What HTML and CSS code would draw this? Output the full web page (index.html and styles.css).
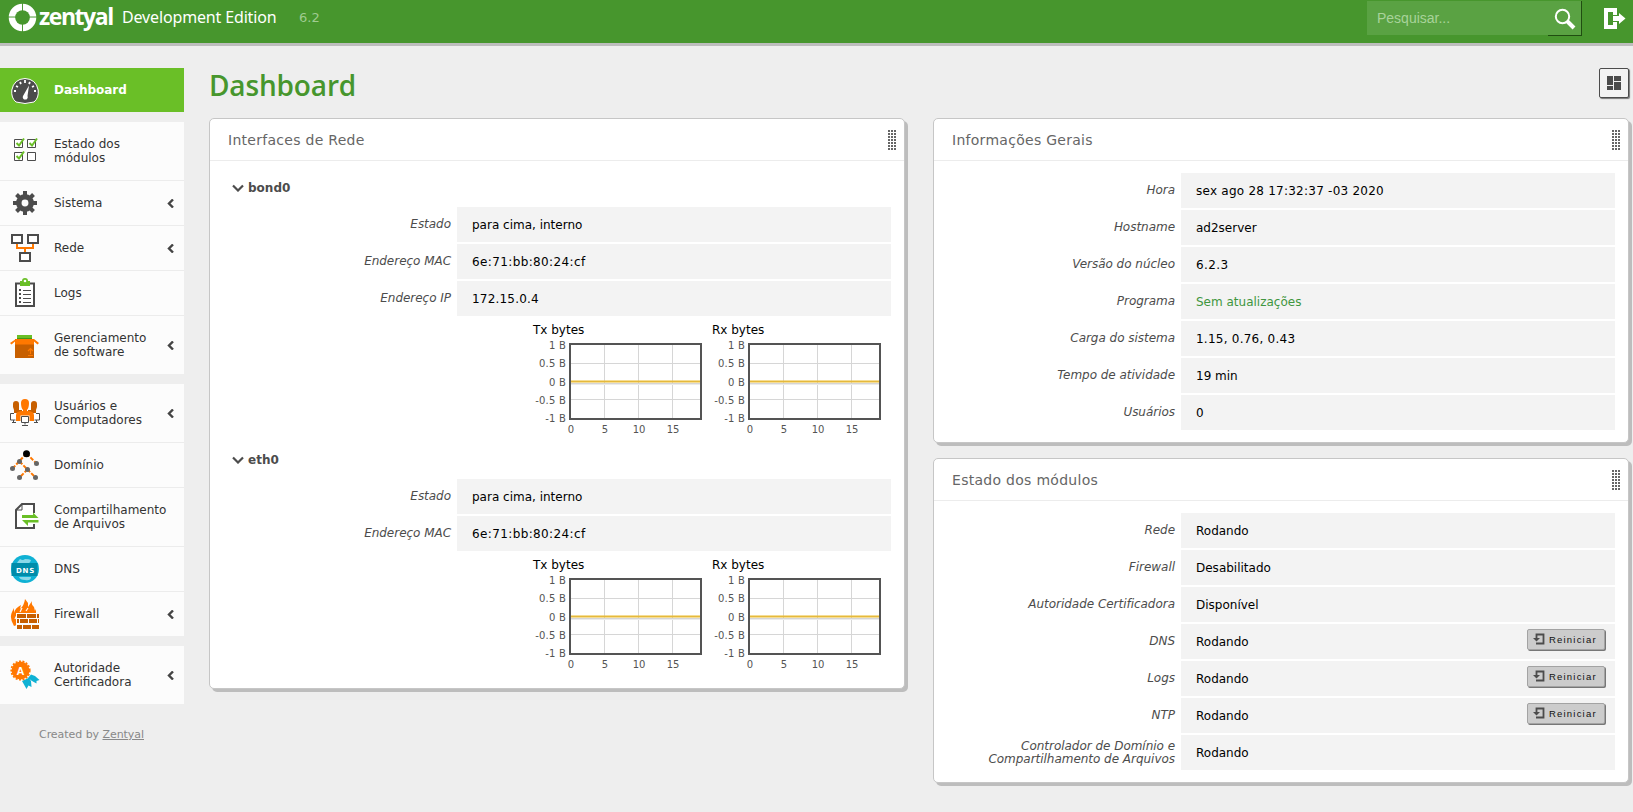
FILE: index.html
```html
<!DOCTYPE html>
<html lang="pt">
<head>
<meta charset="utf-8">
<title>Zentyal - Dashboard</title>
<link rel="stylesheet" href="styles.css">
</head>
<body>
<header class="topbar">
  <svg class="logo-ring" width="29" height="29" viewBox="0 0 30 30"><circle cx="15" cy="15" r="10.500" fill="none" stroke="#fff" stroke-width="7.500"/><path d="M15 0V30M0 14.500H30" stroke="#47962d" stroke-width="1"/><circle cx="15" cy="15" r="7.600" fill="#47962d"/></svg>
  <span class="brand">zentyal</span>
  <span class="edition">Development Edition</span>
  <span class="version">6.2</span>
  <div class="search"><span class="search-text">Pesquisar...</span>
    <span class="search-btn"><svg width="34" height="34" viewBox="0 0 34 34"><circle cx="15.500" cy="15.500" r="6.700" fill="none" stroke="#fff" stroke-width="2"/><path d="M20 20L27 27" stroke="#fff" stroke-width="4"/></svg></span>
  </div>
  <svg class="logout" width="22" height="22" viewBox="0 0 22 22" fill="#fff"><path d="M0 0H13V7H9V4H4V17H9V14H13V21H0Z"/><path d="M9 8H15V5L21.500 10.500L15 16V13H9Z"/></svg>
</header>
<div class="layout">
<aside class="sidebar">
  <nav>
    <div class="group">
      <a class="item active"><svg class="ico" viewBox="0 -1 30 30"><path d="M6 26Q1 22 1.800 14Q4 3 15 2.500Q26 3 28.200 14Q29 22 24 26Q15 29 6 26Z" fill="#4c4c4c" stroke="#fff"/><path d="M4 15H6M6 10L8 11M10 6L11 8M15 4V7M20 6L19 8M24 10L22 11M26 15H24" stroke="#fff" stroke-width="1.800"/><path d="M19 9.500L17.500 20A2.500 2.500 0 1 1 13 20Z" fill="#fff"/></svg><span class="txt">Dashboard</span></a>
    </div>
    <div class="group">
      <a class="item tall"><svg class="ico" viewBox="0 2 30 30"><path d="M4.500 5.500h8v8h-8zM17.500 5.500h8v8h-8zM4.500 18.500h8v8h-8zM17.500 18.500h8v8h-8z" fill="#fff" stroke="#4c4c4c"/><path d="M6.500 9l2.500 2.500l5-7M19.500 9l2.500 2.500l5-7M6.500 22l2.500 2.500l5-7" fill="none" stroke="#6abf27" stroke-width="2"/></svg><span class="txt">Estado dos<br>módulos</span></a>
      <a class="item"><svg class="ico" viewBox="0 0 30 30"><circle cx="15" cy="15" r="6.200" fill="none" stroke="#4c4c4c" stroke-width="5.500"/><path d="M15 3V8M15 22V27M3 15H8M22 15H27M6.500 6.500L10 10M20 20L23.500 23.500M23.500 6.500L20 10M10 20L6.500 23.500" stroke="#4c4c4c" stroke-width="4"/></svg><span class="txt">Sistema</span><svg class="arrow" viewBox="0 0 7 9"><path d="M6 .5L2 4.500L6 8.500" /></svg></a>
      <a class="item"><svg class="ico" viewBox="0 0 30 30"><path d="M7 11V15H23V11M15 15V20" fill="none" stroke="#ff7800" stroke-width="2"/><path d="M2 2h10v8H2zM18 2h10v8H18zM10 20h10v8H10z" fill="#fff" stroke="#4c4c4c" stroke-width="2"/></svg><span class="txt">Rede</span><svg class="arrow" viewBox="0 0 7 9"><path d="M6 .5L2 4.500L6 8.500"/></svg></a>
      <a class="item"><svg class="ico" viewBox="0 0 30 30"><path d="M6 5.500H24V28H6Z" fill="#fff" stroke="#4c4c4c" stroke-width="2"/><path d="M9 3h3q0-3 3-3t3 3h2v5H10V3z" fill="#6abf27"/><circle cx="15" cy="3" r="1.300" fill="#fff"/><path d="M9 12h2M9 16h2M9 20h2M9 24h2" stroke="#4c4c4c" stroke-width="2"/><path d="M13 12.500h8M13 16.500h8M13 20.500h8M13 24.500h8" stroke="#4c4c4c"/></svg><span class="txt">Logs</span></a>
      <a class="item tall"><svg class="ico" viewBox="0 0 30 30"><path d="M7 5h15v5h-15z" fill="#6abf27"/><path d="M7 8h15v1h-15z" fill="#429617"/><path d="M5 9h19v19H5z" fill="#c75f00"/><path d="M6 9H24L29 13L27.500 14.500L24 11.500V14.500H5V11.500L1.500 14.500L0 13Z" fill="#ff7800"/><path d="M20.500 24v-5M18 21l2.500-2.500L23 21M18 25.500h5" fill="none" stroke="#ff7800" stroke-width="1.200"/></svg><span class="txt">Gerenciamento<br>de software</span><svg class="arrow" viewBox="0 0 7 9"><path d="M6 .5L2 4.500L6 8.500"/></svg></a>
    </div>
    <div class="group">
      <a class="item tall"><svg class="ico" viewBox="0 1 30 30"><path d="M3 7q0-3 3-3t3 3v6h3v3H4v-3l-1-3zM27 7q0-3-3-3t-3 3v6h-3v3h8v-3l1-3z" fill="#c75f00"/><path d="M11 6q0-4 4-4t4 4q0 5-2 7v1q7 0 7 4v6H6v-6q0-4 7-4v-1q-2-2-2-7z" fill="#ff7800"/><path d="M0 16h6v9H0zM24 16h6v9h-6zM10.500 18.500h9v8h-9z" fill="#fff"/><g fill="none" stroke="#4c4c4c"><path d="M4 16.500H.5v6.500h5M2 25.500h4M3.500 23v2M26 16.500h3.500v6.500h-5M24 25.500h4M26.500 23v2"/><path d="M11.500 19.500h7v6h-7z"/><path d="M15 25.500v2M12 28.500h6"/></g></svg><span class="txt">Usuários e<br>Computadores</span><svg class="arrow" viewBox="0 0 7 9"><path d="M6 .5L2 4.500L6 8.500"/></svg></a>
      <a class="item"><svg class="ico" viewBox="0 0 30 30"><path d="M16.500 3.500L2.500 18.500M16.500 3.500L26.500 13.500M9.500 11.500L25.500 27.500M17.500 19.500L9.500 27.500" stroke="#ff7800" stroke-width="2" stroke-dasharray="4 1.500"/><circle cx="16.500" cy="3.700" r="3.500"/><g fill="#666"><circle cx="9.500" cy="11.500" r="2.500"/><circle cx="2.500" cy="18.500" r="2.500"/><circle cx="26.500" cy="13.500" r="2.500"/><circle cx="17.500" cy="19.500" r="2.500"/><circle cx="9.500" cy="27.500" r="2.500"/><circle cx="25.500" cy="27.500" r="2.500"/></g></svg><span class="txt">Domínio</span></a>
      <a class="item tall"><svg class="ico" viewBox="0 1 30 30"><path d="M24 12V3H12L6 9V27H24V23" fill="#fff" stroke="#4c4c4c" stroke-width="2"/><path d="M12 3V9H6" fill="none" stroke="#4c4c4c"/><path d="M12 14H23V11.500L28.500 17H12ZM28.500 21.500H18V25L12 19H28.500Z" fill="#6abf27"/></svg><span class="txt">Compartilhamento<br>de Arquivos</span></a>
      <a class="item"><svg class="ico" viewBox="0 0 30 30"><circle cx="15" cy="15" r="14" fill="#0fb1d4"/><path d="M10 5q3 2 5 0q4 0 6 1q-1 4-6 5H6q2-4 4-6zM9 23h12q0 4-6 3q-5 0-6-3z" fill="#8bd9e9"/><path d="M1.500 9H27.500V22H1.500Z" fill="#008caa"/><text x="15.500" y="18.500" class="dns">DNS</text></svg><span class="txt">DNS</span></a>
      <a class="item"><svg class="ico" viewBox="0 0 30 30"><path d="M4 27Q-1 19 2 13L4 9V14Q5 9 11 6L10 10Q14 7 15 0L18 4V8L22 2Q21 6 24 8L25 12L26 10L26 16H7V26Z" fill="#ff7800"/><path d="M10 13L12 9M16 12L18 9M5 20L7 16" stroke="#fcfcfc" stroke-width="1.200"/><path d="M6 14H29V30H6Z" fill="#fcfcfc"/><path d="M7 15H16V19H7ZM17 15H26V19H17ZM27 15H29V19H27ZM7 20H9V24H7ZM10 20H18V24H10ZM19 20H27V24H19ZM28 20H29V24H28ZM7 26H12V30H7ZM13 26H21V30H13ZM22 26H29V30H22Z" fill="#c75f00"/></svg><span class="txt">Firewall</span><svg class="arrow" viewBox="0 0 7 9"><path d="M6 .5L2 4.500L6 8.500"/></svg></a>
    </div>
    <div class="group">
      <a class="item tall"><svg class="ico" viewBox="0 0 30 30"><path d="M12 21L18.500 18L21 21L21.500 27L18.500 25.500L16.500 29ZM18 18L21 14.500L25 16L29.500 20L26.500 21L26.500 23.500L22 21Z" fill="#0fb1d4"/><circle cx="10.500" cy="10.500" r="9" fill="#ff7800"/><circle cx="10.500" cy="10.500" r="9.300" fill="none" stroke="#ff7800" stroke-width="1.600" stroke-dasharray="2 1.500"/><text x="10.500" y="14.500" class="seal">A</text></svg><span class="txt">Autoridade<br>Certificadora</span><svg class="arrow" viewBox="0 0 7 9"><path d="M6 .5L2 4.500L6 8.500"/></svg></a>
    </div>
  </nav>
  <p class="credit">Created by <a>Zentyal</a></p>
</aside>
<main class="main">
  <div class="title-row"><h1>Dashboard</h1><button class="widgets"><svg width="14" height="14" viewBox="0 0 14 14" fill="#4c4c4c"><path d="M0 0h6v9H0zM7 0h7v5H7zM0 10h6v4H0zM7 6h7v8H7z"/></svg></button></div>
  <div class="columns">
    <section class="card">
      <h2>Interfaces de Rede<i class="grip"></i></h2>
      <div class="body">
        <h3><svg width="12" height="8" viewBox="0 0 12 8"><path d="M1 1.500L6 6.500L11 1.500"/></svg>bond0</h3>
        <dl><dt>Estado</dt><dd>para cima, interno</dd><dt>Endereço MAC</dt><dd class="digits">6e:71:bb:80:24:cf</dd><dt>Endereço IP</dt><dd class="digits ip">172.15.0.4</dd></dl>
        <div class="charts">
          <figure><figcaption>Tx bytes</figcaption><div class="plotrow"><div class="ylab"><span>1 B</span><span>0.5 B</span><span>0 B</span><span>-0.5 B</span><span>-1 B</span></div><svg class="plot" viewBox="0 0 133 77"><use href="#grid"/></svg></div><div class="xlab"><span>0</span><span>5</span><span>10</span><span>15</span></div></figure>
          <figure><figcaption>Rx bytes</figcaption><div class="plotrow"><div class="ylab"><span>1 B</span><span>0.5 B</span><span>0 B</span><span>-0.5 B</span><span>-1 B</span></div><svg class="plot" viewBox="0 0 133 77"><use href="#grid"/></svg></div><div class="xlab"><span>0</span><span>5</span><span>10</span><span>15</span></div></figure>
        </div>
        <h3><svg width="12" height="8" viewBox="0 0 12 8"><path d="M1 1.500L6 6.500L11 1.500"/></svg>eth0</h3>
        <dl><dt>Estado</dt><dd>para cima, interno</dd><dt>Endereço MAC</dt><dd class="digits">6e:71:bb:80:24:cf</dd></dl>
        <div class="charts last">
          <figure><figcaption>Tx bytes</figcaption><div class="plotrow"><div class="ylab"><span>1 B</span><span>0.5 B</span><span>0 B</span><span>-0.5 B</span><span>-1 B</span></div><svg class="plot" viewBox="0 0 133 77"><use href="#grid"/></svg></div><div class="xlab"><span>0</span><span>5</span><span>10</span><span>15</span></div></figure>
          <figure><figcaption>Rx bytes</figcaption><div class="plotrow"><div class="ylab"><span>1 B</span><span>0.5 B</span><span>0 B</span><span>-0.5 B</span><span>-1 B</span></div><svg class="plot" viewBox="0 0 133 77"><use href="#grid"/></svg></div><div class="xlab"><span>0</span><span>5</span><span>10</span><span>15</span></div></figure>
        </div>
      </div>
    </section>
    <div class="column">
      <section class="card">
        <h2>Informações Gerais<i class="grip"></i></h2>
        <div class="body"><dl><dt>Hora</dt><dd class="digits date">sex ago 28 17:32:37 -03 2020</dd><dt>Hostname</dt><dd>ad2server</dd><dt>Versão do núcleo</dt><dd class="digits">6.2.3</dd><dt>Programa</dt><dd class="ok">Sem atualizações</dd><dt>Carga do sistema</dt><dd class="digits date">1.15, 0.76, 0.43</dd><dt>Tempo de atividade</dt><dd>19 min</dd><dt>Usuários</dt><dd>0</dd></dl></div>
      </section>
      <section class="card">
        <h2>Estado dos módulos<i class="grip"></i></h2>
        <div class="body"><dl><dt>Rede</dt><dd>Rodando</dd><dt>Firewall</dt><dd>Desabilitado</dd><dt>Autoridade Certificadora</dt><dd>Disponível</dd>
          <dt>DNS</dt><dd>Rodando<button class="restart"><svg width="12" height="12" viewBox="0 0 12 12"><use href="#redo"/></svg>Reiniciar</button></dd>
          <dt>Logs</dt><dd>Rodando<button class="restart"><svg width="12" height="12" viewBox="0 0 12 12"><use href="#redo"/></svg>Reiniciar</button></dd>
          <dt>NTP</dt><dd>Rodando<button class="restart"><svg width="12" height="12" viewBox="0 0 12 12"><use href="#redo"/></svg>Reiniciar</button></dd>
          <dt>Controlador de Domínio e<br>Compartilhamento de Arquivos</dt><dd>Rodando</dd></dl></div>
      </section>
    </div>
  </div>
</main>
</div>
<svg class="defs" width="0" height="0"><defs>
  <g id="grid"><path d="M35.500 1V76M69.500 1V76M103.500 1V76M1 20.500H132M1 56.500H132" fill="none" stroke="#d6d6d6"/><path d="M2 40.500H131" stroke="#d5d5d5"/><path d="M2 41.500H131" stroke="#ececec"/><path d="M2 38.500H131" stroke="#edc240" stroke-width="3" opacity=".55"/><path d="M2 38.500H131" stroke="#e5b93c"/><rect x="1" y="1" width="131" height="75" fill="none" stroke="#545454" stroke-width="2"/></g>
  <g id="redo"><path d="M3.500 6V1.500H10.500V10.500H3" fill="none" stroke="#4c4c4c" stroke-width="1.800"/><path d="M0 5H7L3.500 8.500Z" fill="#4c4c4c"/></g>
</defs></svg>
</body>
</html>
```
FILE: styles.css
```css
* { box-sizing: border-box; }
body { margin: 0; height: 812px; overflow: hidden; background: #eee; font-family: "DejaVu Sans", sans-serif; font-size: 12px; color: #000; }
h1, h2, h3, dl, dd, p, figure { margin: 0; }
button { font: inherit; padding: 0; }
.defs { display: block; }

.topbar { height: 46px; background: #47962d; border-bottom: 3px solid #bdbdbd; display: flex; align-items: flex-start; color: #fff; padding-left: 8px; white-space: nowrap; }
.logo-ring { margin-top: 3px; flex: none; }
.brand { width: 75px; margin: 0 0 0 2px; font: 700 23px/32px "Open Sans", sans-serif; letter-spacing: -1.45px; }
.edition { width: 155px; margin: 5px 0 0 8px; font: 400 16px/24px "Noto Sans", sans-serif; letter-spacing: -.15px; }
.version { margin: 9px 0 0 22px; font-size: 13px; line-height: 18px; color: #9fcb90; }
.search { margin: 1px 0 0 auto; width: 215px; height: 35px; display: flex; justify-content: space-between; }
.search-text { flex: 1; height: 34px; padding-left: 10px; background: #5aa243; color: #a8d39a; font: 14px/34px "Liberation Sans", sans-serif; }
.search-btn { width: 34px; height: 35px; background: #5aa243; border-right: 1px solid #204d11; border-bottom: 1px solid #204d11; }
.search-btn svg { display: block; margin-left: -1px; }
.logout { margin: 8px 7px 0 22px; flex: none; }

.layout { display: flex; }
.sidebar { width: 184px; padding-top: 22px; flex: none; }
.group { margin-bottom: 10px; }
.item { height: 45px; display: flex; align-items: center; background: #fcfcfc; border-bottom: 1px solid #ececec; color: #333; padding-left: 10px; }
.item.tall { height: 59px; }
.item:last-child { height: 44px; border-bottom: 0; }
.item.tall:last-child { height: 58px; }
.item.active { background: #6abf27; color: #fff; font-weight: 700; letter-spacing: -.05px; }
.ico { width: 30px; height: 30px; margin-right: 14px; flex: none; }
.txt { line-height: 14px; white-space: nowrap; padding-bottom: 1px; }
.arrow { width: 7px; height: 9px; margin: 1px 10px 0 auto; }
.arrow path { fill: none; stroke: #444; stroke-width: 2.4; }
.dns { font-size: 7px; font-weight: 700; fill: #fff; text-anchor: middle; letter-spacing: .8px; }
.seal { font: 700 11px "Liberation Sans", sans-serif; fill: #fff; text-anchor: middle; }
.credit { margin-top: 23px; padding-left: 39px; font-size: 11px; line-height: 16px; color: #888; letter-spacing: -.05px; }
.credit a { text-decoration: underline; }

.main { flex: 1; padding: 22px 4px 0 25px; }
.title-row { height: 50px; display: flex; justify-content: space-between; align-items: flex-start; }
h1 { margin-top: -1px; font: 600 28px/36px "Open Sans", sans-serif; letter-spacing: -.15px; color: #47962d; }
.widgets { width: 30px; height: 30px; border: 1px solid #4c4c4c; border-radius: 2px; background: #f3f3f3; box-shadow: 1px 1px 1px #777; display: flex; align-items: center; justify-content: center; }
.columns { display: grid; grid-template-columns: 696px 696px; gap: 28px; align-items: start; }
.column { display: grid; gap: 15px; }
.card { background: #fff; border: 1px solid #c6c6c6; border-radius: 5px; box-shadow: 3px 3px 0 #bdbdbd; }
h2 { height: 42px; padding: 0 7px 0 18px; display: flex; justify-content: space-between; align-items: center; border-bottom: 1px solid #ececec; font-size: 14px; font-weight: 400; letter-spacing: .28px; color: #666; }
.grip { width: 9px; height: 20px; background: repeating-linear-gradient(#fff0 0 2px, #fff 2px 3px), repeating-linear-gradient(90deg, #666 0 2px, #fff 2px 3px); }
.body { padding: 12px; }
h3 { height: 34px; padding: 0 0 4px 10px; display: flex; align-items: center; gap: 4px; font-size: 12px; color: #4c4c4c; }
h3 svg path { fill: none; stroke: #4c4c4c; stroke-width: 2.2; }
dl { display: grid; grid-template-columns: 235px 434px; grid-auto-rows: 35px; row-gap: 2px; }
dt { padding-right: 6px; text-align: right; align-self: center; font-style: italic; line-height: 13px; color: #4c4c4c; white-space: nowrap; letter-spacing: -.03px; }
dd { background: #f3f3f3; padding: 0 9px 0 15px; display: flex; align-items: center; justify-content: space-between; }
.digits { letter-spacing: .38px; }
.digits.ip { letter-spacing: .2px; }
.digits.date { letter-spacing: .24px; }
.ok { color: #3f9640; }
.restart { width: 78px; height: 21px; margin: 0 1px 5px 0; display: flex; align-items: center; gap: 4px; padding-left: 5px; border: 1px solid #a3a3a3; border-radius: 2px; background: #ccc; box-shadow: 1px 1px 0 #777; color: #111; font: 9.5px "Liberation Sans", sans-serif; letter-spacing: 1.2px; }

.charts { height: 129px; padding: 7px 11px 0 0; display: flex; justify-content: flex-end; gap: 9px; }
.charts.last { height: 125px; }
figure { width: 170px; }
figcaption { height: 20px; line-height: 14px; padding-left: 1px; }
.plotrow { display: flex; }
.ylab { width: 34px; margin: -3px 3px -5px 0; display: flex; flex-direction: column; justify-content: space-between; text-align: right; font-size: 10px; line-height: 12px; color: #545454; white-space: nowrap; letter-spacing: .2px; }
.plot { width: 133px; height: 77px; }
.xlab { margin-left: 22px; padding-top: 4px; display: flex; font-size: 10px; line-height: 12px; color: #545454; }
.xlab span { width: 34px; text-align: center; }
```
